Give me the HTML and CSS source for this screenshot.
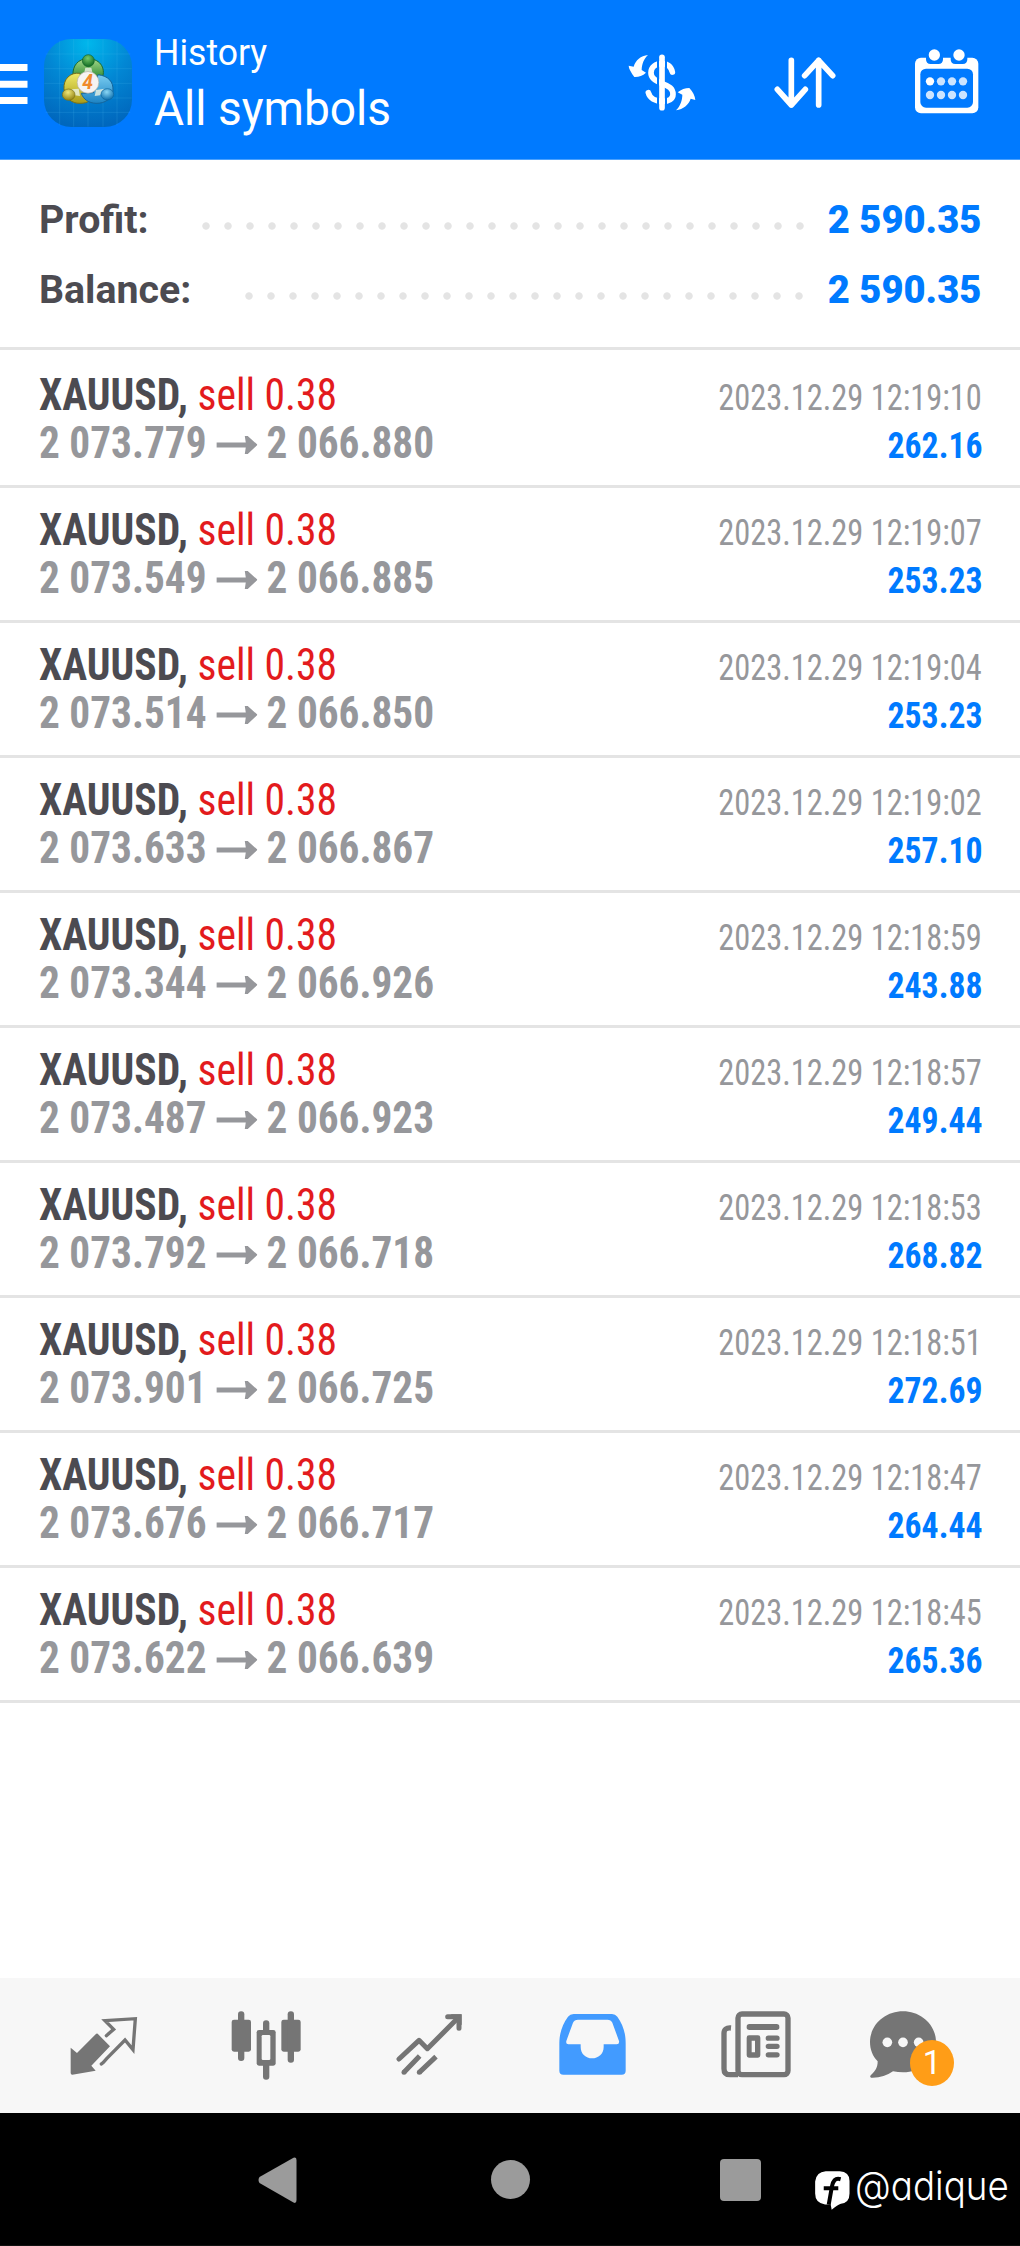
FILE: index.html
```html
<!DOCTYPE html>
<html lang="en">
<head>
<meta charset="utf-8">
<title>History</title>
<link rel="stylesheet" href="styles.css">
</head>
<body>
<header class="topbar">
  <svg class="menu" viewBox="0 0 28 42" fill="#fff"><path d="M0 1h27.5v7H0zM0 17.700h27.500v7H0zM0 34h27.500v7H0z"/></svg>
  <svg class="logo" viewBox="42 27 264 264">
    <defs>
      <radialGradient id="bg" cx=".5" cy=".05" r=".95"><stop offset="0" stop-color="#00b7ec"/><stop offset=".5" stop-color="#0287d4"/><stop offset="1" stop-color="#0067bd"/></radialGradient>
      <linearGradient id="gr" x1="0" y1="0" x2="0" y2="1"><stop offset="0" stop-color="#a5d98a"/><stop offset="1" stop-color="#23832c"/></linearGradient>
      <linearGradient id="ye" x1="0" y1="0" x2="0" y2="1"><stop offset="0" stop-color="#eeea67"/><stop offset="1" stop-color="#a99b18"/></linearGradient>
      <linearGradient id="bl" x1="0" y1="0" x2="0" y2="1"><stop offset="0" stop-color="#79ccf0"/><stop offset="1" stop-color="#1c83c4"/></linearGradient>
      <radialGradient id="hg" cx=".45" cy=".3" r=".7"><stop offset="0" stop-color="#76c96a"/><stop offset="1" stop-color="#0e6a22"/></radialGradient>
      <radialGradient id="hy" cx=".45" cy=".3" r=".7"><stop offset="0" stop-color="#f0e77a"/><stop offset="1" stop-color="#938312"/></radialGradient>
      <radialGradient id="hb" cx=".45" cy=".3" r=".7"><stop offset="0" stop-color="#8bd7f5"/><stop offset="1" stop-color="#0d6fae"/></radialGradient>
    </defs>
    <rect x="42" y="27" width="264" height="264" rx="82" fill="url(#bg)"/>
    <path d="M89 32v254M131 28v262M174 28v262M219 28v262M261 32v254M47 72h254M43 116h262M43 160h262M43 204h262M47 247h254" stroke="#5cc3f0" stroke-opacity=".2" stroke-width="2.500" fill="none"/>
    <g stroke-width="3">
      <path d="M174 86C144 86 127 108 129 136L150 150H200L214 150C230 120 214 86 174 86z" fill="url(#gr)" stroke="#1c6a2c"/>
      <path d="M150 130C120 126 100 148 102 176C104 204 126 221 150 220C162 220 172 218 178 212L160 186z" fill="url(#ye)" stroke="#77701b"/>
      <path d="M204 134C236 138 250 156 249 180C248 206 224 221 198 220C176 219 160 208 154 190L190 188z" fill="url(#bl)" stroke="#15659b"/>
      <path d="M166 113h18l3 14h-24zM124 178l22-2 4 22-16-2zM224 176l-26 4-4 18 16-2z" fill="#eaf3e4" fill-opacity=".8" stroke="none"/>
    </g>
    <circle cx="175" cy="92" r="18" fill="url(#hg)" stroke="#11632a" stroke-width="2"/>
    <ellipse cx="116" cy="194" rx="19" ry="17" fill="url(#hy)" stroke="#7d7216" stroke-width="2"/>
    <ellipse cx="232" cy="193" rx="19" ry="17" fill="url(#hb)" stroke="#0e659d" stroke-width="2"/>
    <circle cx="174" cy="157" r="32.500" fill="#f6f3f2" stroke="#b4b1a5" stroke-width="2"/>
    <text class="logo-digit" x="173" y="178" text-anchor="middle">4</text>
  </svg>
  <div class="titles">
    <div class="title"><span>History</span></div>
    <div class="subtitle"><span>All symbols</span></div>
  </div>
  <div class="actions">
    <svg viewBox="0 0 420 330">
      <g fill="none" stroke="#fff" stroke-width="17" stroke-linecap="round" stroke-linejoin="round">
        <path d="M186 82v151"/>
        <path d="M217 126C213 108 200 101 187 101C166 101 153 112 153 128C153 143 163 150 185 160C207 168 219 176 219 193C219 207 206 214 188 214C166 214 149 204 145 188"/>
      </g>
      <path d="M174 86v148M198 86v62M198 180v52" stroke="#007aff" stroke-width="6" fill="none"/>
      <g fill="#fff">
        <path d="M144 75C122 78 107 90 101 110L86 107Q86 118 103 141Q122 142 138 128L125 120C126 102 131 87 144 75z"/>
        <path d="M228 241C250 237 266 225 272 206L286 210Q284 191 268 174Q249 174 233 187L247 194C247 211 241 228 228 241z"/>
      </g>
    </svg>
    <svg viewBox="420 0 420 330" fill="none" stroke="#fff" stroke-width="17" stroke-linecap="round" stroke-linejoin="round"><path d="M574 91v134M532 178l42 47 42-47M656 225V91M614 137l42-46 42 46"/></svg>
    <svg viewBox="840 0 420 330">
      <rect x="945" y="83" width="190" height="167" rx="18" fill="#fff"/>
      <rect x="961" y="116" width="158" height="117" rx="17" fill="#007aff"/>
      <path d="M978 76h51v12q0 14-14 14h-23q-14 0-14-14zM1052 76h50v12q0 14-14 14h-22q-14 0-14-14z" fill="#007aff"/>
      <circle cx="1003" cy="75" r="17" fill="#fff"/><circle cx="1077" cy="75" r="17" fill="#fff"/>
      <circle cx="990" cy="154" r="12.500" fill="#fff"/>
      <g fill="#cce4ff"><circle cx="1023" cy="154" r="12.500"/><circle cx="1056" cy="154" r="12.500"/><circle cx="1089" cy="154" r="12.500"/><circle cx="990" cy="195" r="12.500"/><circle cx="1023" cy="195" r="12.500"/><circle cx="1056" cy="195" r="12.500"/><circle cx="1089" cy="195" r="12.500"/></g>
    </svg>
  </div>
</header>

<svg class="defs"><symbol id="arrow" viewBox="0 0 42 20" preserveAspectRatio="none"><path d="M0 7.500h30L29 1h3L42 9.800 32 19h-3l1-6.500H0z"/></symbol></svg>

<section class="summary">
  <div class="sum-row"><span>Profit:</span><i class="leader"></i><b>2 590.35</b></div>
  <div class="sum-row"><span>Balance:</span><i class="leader"></i><b>2 590.35</b></div>
</section>

<main class="deals">
  <article class="deal">
    <div class="line"><span class="symbol">XAUUSD, <em>sell 0.38</em></span><time>2023.12.29 12:19:10</time></div>
    <div class="line"><span class="prices"><span>2 073.779</span><svg><use href="#arrow"/></svg><span>2 066.880</span></span><span class="profit">262.16</span></div>
  </article>
  <article class="deal">
    <div class="line"><span class="symbol">XAUUSD, <em>sell 0.38</em></span><time>2023.12.29 12:19:07</time></div>
    <div class="line"><span class="prices"><span>2 073.549</span><svg><use href="#arrow"/></svg><span>2 066.885</span></span><span class="profit">253.23</span></div>
  </article>
  <article class="deal">
    <div class="line"><span class="symbol">XAUUSD, <em>sell 0.38</em></span><time>2023.12.29 12:19:04</time></div>
    <div class="line"><span class="prices"><span>2 073.514</span><svg><use href="#arrow"/></svg><span>2 066.850</span></span><span class="profit">253.23</span></div>
  </article>
  <article class="deal">
    <div class="line"><span class="symbol">XAUUSD, <em>sell 0.38</em></span><time>2023.12.29 12:19:02</time></div>
    <div class="line"><span class="prices"><span>2 073.633</span><svg><use href="#arrow"/></svg><span>2 066.867</span></span><span class="profit">257.10</span></div>
  </article>
  <article class="deal">
    <div class="line"><span class="symbol">XAUUSD, <em>sell 0.38</em></span><time>2023.12.29 12:18:59</time></div>
    <div class="line"><span class="prices"><span>2 073.344</span><svg><use href="#arrow"/></svg><span>2 066.926</span></span><span class="profit">243.88</span></div>
  </article>
  <article class="deal">
    <div class="line"><span class="symbol">XAUUSD, <em>sell 0.38</em></span><time>2023.12.29 12:18:57</time></div>
    <div class="line"><span class="prices"><span>2 073.487</span><svg><use href="#arrow"/></svg><span>2 066.923</span></span><span class="profit">249.44</span></div>
  </article>
  <article class="deal">
    <div class="line"><span class="symbol">XAUUSD, <em>sell 0.38</em></span><time>2023.12.29 12:18:53</time></div>
    <div class="line"><span class="prices"><span>2 073.792</span><svg><use href="#arrow"/></svg><span>2 066.718</span></span><span class="profit">268.82</span></div>
  </article>
  <article class="deal">
    <div class="line"><span class="symbol">XAUUSD, <em>sell 0.38</em></span><time>2023.12.29 12:18:51</time></div>
    <div class="line"><span class="prices"><span>2 073.901</span><svg><use href="#arrow"/></svg><span>2 066.725</span></span><span class="profit">272.69</span></div>
  </article>
  <article class="deal">
    <div class="line"><span class="symbol">XAUUSD, <em>sell 0.38</em></span><time>2023.12.29 12:18:47</time></div>
    <div class="line"><span class="prices"><span>2 073.676</span><svg><use href="#arrow"/></svg><span>2 066.717</span></span><span class="profit">264.44</span></div>
  </article>
  <article class="deal">
    <div class="line"><span class="symbol">XAUUSD, <em>sell 0.38</em></span><time>2023.12.29 12:18:45</time></div>
    <div class="line"><span class="prices"><span>2 073.622</span><svg><use href="#arrow"/></svg><span>2 066.639</span></span><span class="profit">265.36</span></div>
  </article>
</main>

<nav class="tabs">
  <svg viewBox="-57 24 489 405">
    <path d="M173 191L210 229L154 287L167 302L97 314Q92 314 92 309V233L111 249L167 193Q170 189 173 191z" fill="#757575"/>
    <path d="M199 197L221 178L195 152L286 146L279 239L255 210L200 266Q188 280 184 282" fill="none" stroke="#757575" stroke-width="10" stroke-linecap="round"/>
  </svg>
  <svg viewBox="432 24 489 405" fill="#757575">
    <rect x="575" y="149" width="58" height="96" rx="7"/><rect x="594" y="124" width="19" height="149" rx="9"/>
    <rect x="724" y="149" width="58" height="96" rx="7"/><rect x="743" y="124" width="19" height="154" rx="9"/>
    <rect x="669" y="151" width="19" height="178" rx="9"/><rect x="650" y="180" width="57" height="107" rx="7"/>
    <rect x="665" y="195" width="26" height="75" rx="4" fill="#f7f7f7"/>
  </svg>
  <svg viewBox="921 24 489 405" fill="none" stroke="#757575" stroke-width="15">
    <path d="M1077 267L1137 211L1162 236L1250 148" stroke-linecap="round" stroke-linejoin="round"/>
    <path d="M1223 140.500h34v34" stroke-linecap="round"/><path d="M1232 133h33v33z" fill="#757575" stroke="none"/>
    <path d="M1139 258L1092 307M1188 260L1138 307"/><g fill="#757575" stroke="none"><circle cx="1092" cy="307" r="7.500"/><circle cx="1138" cy="307" r="7.500"/></g>
  </svg>
  <svg viewBox="-60 24 489 405">
    <path fill="#429bff" fill-rule="evenodd" d="M131 132H246Q256 132 262 140C280 166 287 190 287 220V302Q287 314 275 314H100Q88 314 88 302V220C88 190 97 164 114 140Q120 132 131 132zM144 149Q133 149 129 158L109 213Q107 223 115 223H152V231C152 252 168 265 186 265C205 265 221 252 221 231V223H260Q269 223 267 213L247 158Q243 149 232 149z"/>
  </svg>
  <svg viewBox="429 24 489 405">
    <g fill="none" stroke="#757575" stroke-width="16"><rect x="624" y="132" width="150" height="182" rx="12"/><path d="M603 174Q582 172 582 190V296Q582 314 600 314H624"/></g>
    <rect x="650" y="162" width="98" height="18" rx="8" fill="#757575"/>
    <path fill="#757575" fill-rule="evenodd" d="M657 196h27q7 0 7 7v53q0 7-7 7h-27q-7 0-7-7v-53q0-7 7-7zM665 212v35h10v-35z"/>
    <path d="M715 204.500h26M715 229h26M715 254.500h26" stroke="#757575" stroke-width="16" stroke-linecap="round"/>
  </svg>
  <div class="messages">
    <svg viewBox="918 24 489 405">
      <path fill="#757575" d="M1119 124C1173 124 1218 165 1218 216C1218 268 1173 307 1119 307Q1104 307 1089 304C1070 318 1048 324 1023 323Q1018 320 1023 315C1036 304 1043 292 1043 274C1028 258 1020 239 1020 216C1020 165 1065 124 1119 124z"/>
      <g fill="#f7f7f7"><circle cx="1072" cy="217" r="14.500"/><circle cx="1119" cy="217" r="14.500"/><circle cx="1166" cy="217" r="14.500"/></g>
    </svg>
    <span class="badge">1</span>
  </div>
</nav>

<footer class="sysbar">
  <svg class="back" viewBox="0 0 39 46"><path d="M38.500 3v40q0 4-3 2.500L1.500 26Q-.5 23 1.500 20L35.500 .8Q38.500-.5 38.500 3z" fill="#9b9b9b"/></svg>
  <i class="home"></i>
  <i class="recent"></i>
  <svg class="fb" viewBox="0 0 105 118"><path d="M32 1H74Q104 3 104 30V68Q104 96 78 99Q68 102 50 117L47 101H30Q0 97 0 68V32Q3 3 32 1z" fill="#fff"/><path d="M77 25C60 20 54 31 51 46L41 102M26 52H70" fill="none" stroke="#000" stroke-width="12"/></svg>
  <span class="handle"><span>@adique</span></span>
</footer>
</body>
</html>
```
FILE: styles.css
```css
* { box-sizing: border-box; }
body { margin: 0; width: 1020px; height: 2246px; display: flex; flex-direction: column; background: #fff; font-family: Roboto, "Liberation Sans", sans-serif; white-space: nowrap; }
svg { display: block; flex: none; }
.defs { width: 0; height: 0; }

.topbar { height: 160px; display: flex; align-items: flex-start; background: #007aff; border-bottom: 1px solid #4ba1fd; color: #fff; }
.menu { width: 28px; height: 42px; margin-top: 63px; }
.logo { width: 88px; height: 88px; margin: 39px 0 0 16px; }
.logo-digit { font: italic bold 58px Roboto, sans-serif; fill: #f08a2c; }
.titles { margin-left: 22px; padding-top: 28px; width: 260px; }
.title { font-size: 36.5px; line-height: 50px; }
.subtitle { font-size: 48px; line-height: 62px; }
.title span, .subtitle span { display: inline-block; transform-origin: left; }
.title span { transform: scaleX(.975); }
.subtitle span { transform: scaleX(.96); }
.actions { display: flex; margin-left: auto; padding-top: 30px; }
.actions svg { width: 140px; height: 110px; }

.summary { height: 190px; padding: 25px 39px 0; border-bottom: 3px solid #e4e4e4; }
.sum-row { display: flex; height: 70px; line-height: 70px; font-size: 39.3px; font-weight: bold; color: #4c4b51; }
.sum-row b { color: #007aff; margin-left: 16px; transform: scaleX(.97); transform-origin: right; }
.leader { flex: 1; margin-left: 46.5px; background: radial-gradient(circle at 11px 41px, #e4e4e4 3.3px, transparent 4.100px) 0 0 / 22px 70px repeat-x; }

.deal { height: 135px; padding: 18px 38px 0 39px; border-bottom: 3px solid #e4e4e4; font-stretch: 75%; }
.deal:first-child { height: 138px; padding-top: 21px; }
.line { display: flex; justify-content: space-between; align-items: baseline; height: 48px; line-height: 48px; }
.symbol, .prices { font-size: 44px; font-weight: bold; transform: scaleX(.945); transform-origin: left; }
.symbol { color: #4c4b51; }
.symbol em { font-style: normal; font-weight: 400; color: #e31b1d; }
.prices { display: flex; color: #96979b; transform: scaleX(.938); }
.prices svg { width: 44px; height: 20px; margin: 16px 10px 0 10px; fill: currentColor; }
.line time, .profit { font-size: 36px; transform-origin: right; }
.line time { color: #96979b; transform: scaleX(.9); }
.profit { font-weight: bold; color: #007aff; transform: scaleX(.935); }

.tabs { height: 135px; margin-top: auto; padding-left: 21px; display: flex; background: #f7f7f7; }
.tabs svg { width: 163px; height: 135px; }
.messages { position: relative; }
.badge { position: absolute; left: 74px; top: 62px; width: 44px; height: 46px; border-radius: 50%; background: #ff9d17; color: #fff; font-size: 33px; line-height: 46px; text-align: center; }

.sysbar { height: 133px; display: flex; align-items: flex-start; background: #000; border-bottom: 1px solid #111; }
.back { width: 39px; height: 46px; margin: 44px 0 0 258px; }
.home { width: 39px; height: 39px; margin: 47px 0 0 194px; border-radius: 50%; background: #9b9b9b; }
.recent { width: 41px; height: 42px; margin: 46px 0 0 190px; border-radius: 4px; background: #9b9b9b; }
.fb { width: 35px; height: 39px; margin: 58px 0 0 54px; }
.handle { margin: 49px 0 0 5px; font: 300 40px/48px Inter, sans-serif; font-feature-settings: "cv11"; color: #fff; width: 155px; }
.handle span { display: inline-block; transform: scaleX(.92); transform-origin: left; }
```
